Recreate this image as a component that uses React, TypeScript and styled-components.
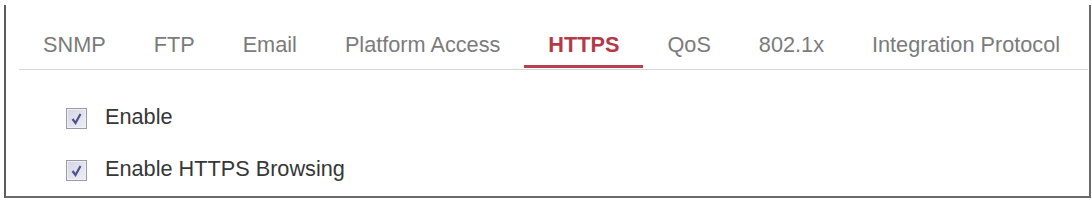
import React from "react";
import styled, { createGlobalStyle } from "styled-components";

const Global = createGlobalStyle`
  html, body { margin: 0; padding: 0; background: #ffffff; }
  body { font-family: "Liberation Sans", Arial, sans-serif; }
`;

const Frame = styled.div`
  box-sizing: border-box;
  margin: 5px 0 0 4px;
  width: 1087px;
  height: 193px;
  border-left: 2px solid #5c5c5c;
  border-right: 2px solid #6a6a6a;
  border-bottom: 2px solid #6a6a6a;
  background: #ffffff;
`;

const TabBar = styled.div`
  display: flex;
  margin: 0 1px 0 13px;
  padding-top: 28px;
  border-bottom: 1px solid #d6d6d6;
`;

const Tab = styled.div<{ $active?: boolean }>`
  padding: 0 24px 8px;
  margin-bottom: 1px;
  line-height: 24px;
  font-size: 21.7px;
  white-space: nowrap;
  color: ${(p) => (p.$active ? "#b43a48" : "#7b7b7b")};
  font-weight: ${(p) => (p.$active ? 700 : 400)};
  border-bottom: 3px solid ${(p) => (p.$active ? "#b9404e" : "transparent")};
`;

const Content = styled.div`
  display: flex;
  flex-direction: column;
  gap: 28px;
  padding: 35px 0 0 60px;
`;

const Row = styled.label`
  display: flex;
  align-items: center;
  gap: 18px;
  height: 24px;
  font-size: 21.7px;
  color: #363636;
`;

const Box = styled.span`
  box-sizing: border-box;
  width: 21px;
  height: 21px;
  margin-top: 2px;
  border: 1px solid #9a9aa8;
  background: linear-gradient(135deg, #d6d6e4 0%, #eeeef6 100%);
  box-shadow: inset 0 0 0 1px #f0f0f6;
  display: flex;
  align-items: center;
  justify-content: center;
`;

const Check = () => (
  <svg width="15" height="15" viewBox="0 0 15 15">
    <path d="M3.5 8 L6.5 12 L11.5 3" fill="none" stroke="#50508e" strokeWidth="2.2" />
  </svg>
);

const tabs = ["SNMP", "FTP", "Email", "Platform Access", "HTTPS", "QoS", "802.1x", "Integration Protocol"];

export default function App() {
  return (
    <>
      <Global />
      <Frame>
        <TabBar>
          {tabs.map((t) => (
            <Tab key={t} $active={t === "HTTPS"}>
              {t}
            </Tab>
          ))}
        </TabBar>
        <Content>
          <Row>
            <Box>
              <Check />
            </Box>
            Enable
          </Row>
          <Row>
            <Box>
              <Check />
            </Box>
            Enable HTTPS Browsing
          </Row>
        </Content>
      </Frame>
    </>
  );
}
